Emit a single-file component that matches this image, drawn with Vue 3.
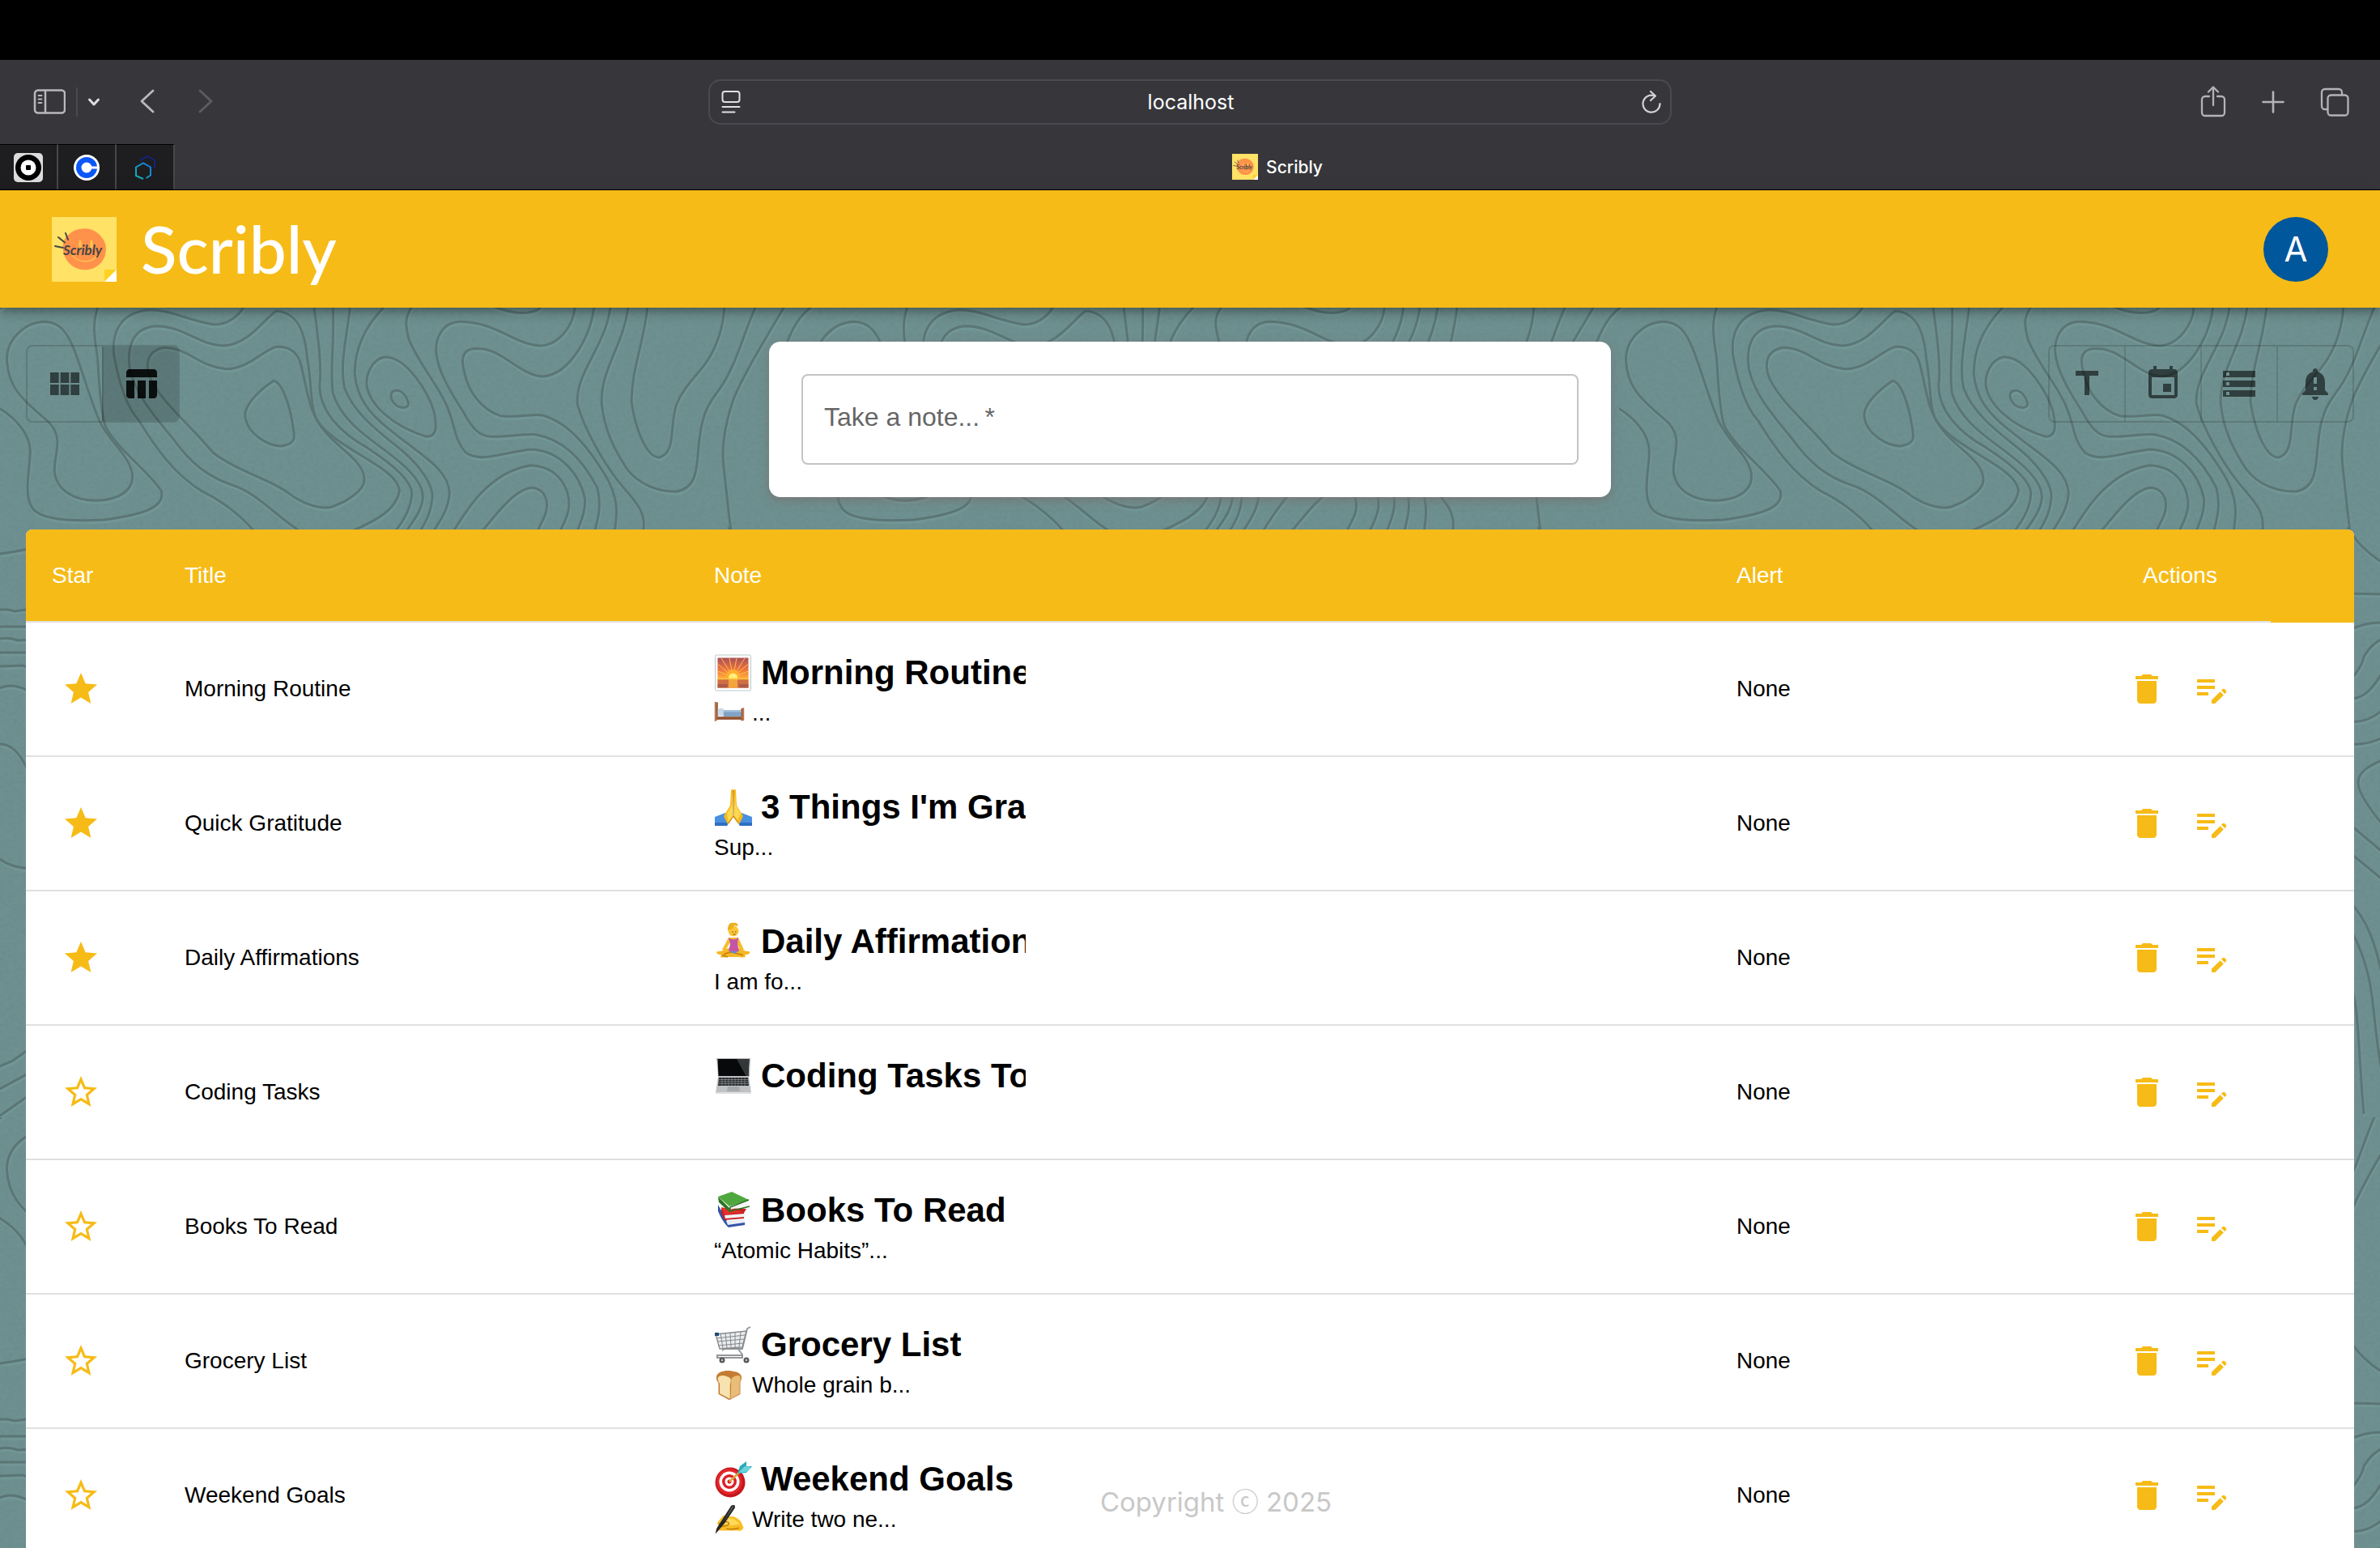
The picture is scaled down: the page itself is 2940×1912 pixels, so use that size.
<script setup>
import { ref } from 'vue'

const icons = {
  grid: 'M14.67 5v6.5H9.33V5h5.34zm1 6.5H21V5h-5.33v6.5zm-1 7.5v-6.5H9.33V19h5.34zm1-6.5V19H21v-6.5h-5.33zm-7.34 0H3V19h5.33v-6.5zm0-1V5H3v6.5h5.33z',
  table: 'M10 10.02h5V21h-5V10.02zM17 21h3c1.1 0 2-.9 2-2v-9h-5v11zm3-18H5c-1.1 0-2 .9-2 2v3h19V5c0-1.1-.9-2-2-2zM3 19c0 1.1.9 2 2 2h3V10H3v9z',
  title: 'M5 4v3h5.5v12h3V7H19V4H5z',
  event: 'M17 12h-5v5h5v-5zM16 1v2H8V1H6v2H5c-1.11 0-1.99.9-1.99 2L3 19c0 1.1.89 2 2 2h14c1.1 0 2-.9 2-2V5c0-1.1-.9-2-2-2h-1V1h-2zm3 18H5V8h14v11z',
  storage: 'M2 20h20v-4H2v4zm2-3h2v2H4v-2zM2 4v4h20V4H2zm4 3H4V5h2v2zm-4 7h20v-4H2v4zm2-3h2v2H4v-2z',
  bell: 'M18 16v-5c0-3.07-1.64-5.64-4.5-6.32V4c0-.83-.67-1.5-1.5-1.5s-1.5.67-1.5 1.5v.68C7.63 5.36 6 7.92 6 11v5l-2 2v1h16v-1l-2-2zm-5 0h-2v-2h2v2zm0-4h-2V8h2v4zm-1 10c1.1 0 2-.9 2-2h-4c0 1.1.89 2 2 2z',
  star: 'M12 17.27L18.18 21l-1.64-7.03L22 9.24l-7.19-.61L12 2 9.19 8.63 2 9.24l5.46 4.73L5.82 21z',
  starOutline: 'M22 9.24l-7.19-.62L12 2 9.19 8.63 2 9.24l5.46 4.73L5.82 21 12 17.27 18.18 21l-1.63-7.03L22 9.24zM12 15.4l-3.76 2.27 1-4.28-3.32-2.88 4.38-.38L12 6.1l1.71 4.04 4.38.38-3.32 2.88 1 4.28L12 15.4z',
  trash: 'M6 19c0 1.1.9 2 2 2h8c1.1 0 2-.9 2-2V7H6v12zM19 4h-3.5l-1-1h-5l-1 1H5v2h14V4z',
  edit: 'M3 10h11v2H3v-2zm0-2h11V6H3v2zm0 8h7v-2H3v2zm15.01-3.13.71-.71c.39-.39 1.02-.39 1.41 0l.71.71c.39.39.39 1.02 0 1.41l-.71.71-2.12-2.12zm-.71.71-5.3 5.3V21h2.12l5.3-5.3-2.12-2.12z',
}

const views = [
  { key: 'grid', label: 'Grid view' },
  { key: 'table', label: 'Table view' },
]
const filters = [
  { key: 'title', label: 'Sort by title' },
  { key: 'event', label: 'Sort by date' },
  { key: 'storage', label: 'Sort by storage' },
  { key: 'bell', label: 'Sort by alert' },
]
const view = ref('table')
const draft = ref('')

// Emoji artwork, each on a 48 x 48 canvas.
const emoji = {
  sunrise: '<defs><linearGradient id="sky" x1="0" y1="0" x2="0" y2="1"><stop offset="0" stop-color="#a8505a"/><stop offset=".4" stop-color="#ee7440"/><stop offset=".7" stop-color="#ffb03a"/></linearGradient></defs><rect x="1.500" y="2" width="44" height="44" rx="1.500" fill="#fff" stroke="#b9c8c8"/><path fill="url(#sky)" d="M4.500 5.500h38v37h-38z"/><g stroke="#ffbe48" stroke-width="1"><path d="M23.500 29 9 6M23.500 29 19 6M23.500 29 28 6M23.500 29 38 6M23.500 29 4.500 13M23.500 29 42.500 13M23.500 29 4.500 22M23.500 29 42.500 22"/></g><circle cx="23.500" cy="29" r="9" fill="#ffae2e"/><circle cx="23.500" cy="30" r="5.500" fill="#ffee7a"/><path fill="#cf6f43" d="M4.500 31.500h38v11h-38z"/><path fill="#f3a53c" d="M18 31.500h11v11H18z"/><path d="M4.500 31.500h38" stroke="#ffc83e" stroke-width="1.500"/><path fill="#9a4d52" opacity=".6" d="M4.500 38h12v4.500h-12zM31 38h11.500v4.500H31z"/>',
  bed: '<path fill="#b87750" d="M1 6l4 1v28l-4 2zM43 16l4-1v20l-4 1z"/><path fill="#8d4f33" d="M4 7h2v26H4zM42 17h2v18h-2z"/><path fill="#a96a49" d="M3 29h42v5H3z"/><path fill="#7c452f" d="M5 31h38v1.500H5z"/><path fill="#c9d8e6" d="M6 18c4-3 9-2 10 2v8H6z"/><path fill="#7fa3c6" d="M15 19h27v10H15z"/><path fill="#a0bedb" d="M15 19h27l1 3H15z"/>',
  pray: '<path fill="#4a90e0" d="M1 36l13-5 7 8-5 8H1zM47 36l-13-5-7 8 5 8h15z"/><path fill="#2f6fc0" d="M1 43h17l-2 4H1zM47 43H30l2 4h15z"/><path fill="#f8b91d" d="M12 35l8-13 1-18c0-3 3-3 3 0l1 31-8 10zM36 35l-8-13-1-18c0-3-3-3-3 0l-1 31 8 10z"/><path fill="#ffd84f" d="M16 32l6-10 .5-17 1 30-6 7zM33 32l-6-10-1-15-1 27 4 6z"/><path d="M24 3v32l-6 9M24 35l6 9" fill="none" stroke="#b97a10"/>',
  yoga: '<path fill="#f5b723" d="M5 36c5 1 10-5 15-4l4 3 4-3c5-1 10 5 15 4 4 2-2 5-5 4 3 4-3 4-7 3H16c-4 1-10 1-7-3-3 1-9-3-4-4z"/><path d="M12 40c8-5 15-2 24 1M10 41l7 2" stroke="#c67c10" fill="none" stroke-width="1.500"/><path fill="#f7bd2c" d="M18 19l12 0 7 15-4 1-7-12h-5l-7 12-4-1z"/><path fill="#c455a5" d="M18 19c3 3 9 3 12 0l-1 8 2 9H18l2-9z"/><path fill="#5a90d8" d="M19 36h11l-5 3z"/><circle cx="24" cy="11" r="6.500" fill="#fbc638"/><path fill="#edb01e" d="M17 10c0-6 2-10 7-9 6-1 6 4 5 4l-4-1-2 4z"/><path d="M22 12h1.500M26 12h1.500M23.500 15h3" stroke="#7c4c11"/>',
  laptop: '<path fill="#b9bbbd" d="M3 2h42l-1 23H5z"/><path fill="#08090a" d="M4.500 3h39l-1 21h-37z"/><path fill="#33373a" d="M28 3h15.500l-1 21h-3z"/><path fill="#bfc1c3" d="M5 25h38l3 20H2z"/><path fill="#26292b" d="M6 26h36l1 10H5z"/><path d="M5 28.500h38M5 31h38M5 33.500h38" stroke="#8b8e91" stroke-width=".8"/><path d="M10 26v10M14 26v10M18 26v10M22 26v10M26 26v10M30 26v10M34 26v10M38 26v10" stroke="#8b8e91" stroke-width=".7"/><path fill="#a7aaad" d="M17 37h14l1 6H16z"/><path fill="#dfe0e1" d="M2 44h44v2H2z"/>',
  books: '<path fill="#3454a8" d="M5 17l12 22 21-2v5l-20 3C12 40 7 30 5 25z"/><path fill="#e9eef5" d="M15 37l23-2v4l-21 3z"/><path fill="#c81f26" d="M9 21l31 1-3 5v7l-24 2-4-9z"/><path fill="#f2f2f2" d="M13 30l25-2v4l-24 2z"/><path fill="#e7302b" d="M9 20l28 6-24 3z"/><path fill="#2c7526" d="M5 7l14 14v5L6 14z"/><path fill="#4fa83d" d="M5 7l17-6 21 10-24 8z"/><path fill="#f4f4f4" d="M20 20l22-7v4l-22 6z"/><path d="M43 11l-23 9v5l24-6" stroke="#26701f" stroke-width="1.500" fill="none"/>',
  cart: '<path d="M45 2l-4 2-6 25H13L10 31" fill="none" stroke="#8f9295" stroke-width="1.800"/><path fill="#d4d7d9" fill-opacity=".5" stroke="#85888b" stroke-width="1.300" d="M2 11l38-4-5 20-28 2z"/><path d="M3 16l35-4M4 20l33-3M5 25l31-3M8 10l3 18M14 10l2 18M20 9l1 18M26 8l0 19M33 8l-2 19" stroke="#85888b" stroke-width="1"/><path d="M29 28l6 8v4H4v-3h31" fill="none" stroke="#94979a" stroke-width="2"/><circle cx="10" cy="43" r="3.500" fill="#55585b"/><circle cx="40" cy="43" r="3.500" fill="#55585b"/><circle cx="10" cy="43" r="1.200" fill="#ccc"/><circle cx="40" cy="43" r="1.200" fill="#ccc"/><path fill="#214a78" d="M1 9h5v4H1z"/>',
  bread: '<path fill="#c47c33" d="M4 10C5 3 18 0 28 2c10 1 15 5 15 10 0 3-1 5-2 7v19L24 47 7 38V20c-2-2-4-6-3-10z"/><path fill="#e9bd77" d="M27 14c4-5 12-7 14-3 1 3 0 5-1 8v18l-14 8z"/><path fill="#f7e2b0" d="M6 13c1-5 9-5 14-3 6 2 7 5 6 9l-1 5v21L9 37V21c-2-2-3-5-3-8z"/>',
  target: '<circle cx="20" cy="28" r="18.500" fill="#c4171e"/><circle cx="19" cy="27" r="16" fill="#e3262b"/><circle cx="19" cy="27" r="12.500" fill="#fff"/><circle cx="19" cy="27" r="9" fill="#da2127"/><circle cx="19" cy="27" r="5.500" fill="#fff"/><circle cx="19" cy="27" r="2.500" fill="#d31d23"/><path d="M19 27l15-14" stroke="#d7a93a" stroke-width="2.500"/><path fill="#2ba8b8" d="M29 17l3-9 8-6 0 6 7 0-7 8z"/><path fill="#69d5dc" d="M30 16l8-8 9 1-7 6z"/>',
  writing: '<path fill="#f8bd25" d="M5 29l8-10c3-3 6-1 6 1l9-1c5 0 9 3 14 8l4 9c-1 5-5 6-9 5H9c-5 0-5-5-2-8z"/><path fill="#ffd957" d="M14 21l13 1c6 1 10 6 14 9l-14 2-13-2z"/><path d="M7 31l11-4c6 0 7 5 2 6l-8 2M19 38c6 1 14 1 20-1" fill="none" stroke="#be7a0c" stroke-width="1.800"/><path fill="#252628" d="M27 2l5-1 1 4-16 24-11 13-4 4 2-8z"/><path fill="#636568" d="M28 4l3-1-16 25z"/>',
}

const notes = [
  { title: 'Morning Routine', starred: true, icon: 'sunrise', heading: 'Morning Routine', subIcon: 'bed', text: '...' },
  { title: 'Quick Gratitude', starred: true, icon: 'pray', heading: "3 Things I'm Grateful For", text: 'Sup...' },
  { title: 'Daily Affirmations', starred: true, icon: 'yoga', heading: 'Daily Affirmations', text: 'I am fo...' },
  { title: 'Coding Tasks', starred: false, icon: 'laptop', heading: 'Coding Tasks Today', text: '' },
  { title: 'Books To Read', starred: false, icon: 'books', heading: 'Books To Read', text: '“Atomic Habits”...' },
  { title: 'Grocery List', starred: false, icon: 'cart', heading: 'Grocery List', subIcon: 'bread', text: 'Whole grain b...' },
  { title: 'Weekend Goals', starred: false, icon: 'target', heading: 'Weekend Goals', subIcon: 'writing', text: 'Write two ne...' },
]

// Contour lines of the backdrop tile (drawn on a 1633 x 3000 grid, scaled to 1000 x 1000).
const contours = [
  'M90 64C50 66 12 130 14 210C18 330 60 370 100 440C130 500 108 560 110 620C114 690 150 727 195 727C240 724 270 690 267 630C262 560 220 510 200 430C180 340 165 240 150 170C135 100 120 66 90 64Z',
  'M200 0C185 60 190 120 197 200C200 300 205 430 215 460C240 540 300 620 325 690C335 750 290 780 210 798C140 805 90 798 70 765C45 720 60 620 61 550C62 480 30 420 0 386L-60 310',
  'M495 0C480 50 455 78 430 74C380 60 340 18 300 20C240 30 225 110 230 190C240 290 255 380 280 430C310 520 350 630 410 695C450 730 490 790 512 840',
  'M710 840C760 800 800 760 806 690C800 600 680 540 640 430C625 380 630 300 620 200C615 100 600 30 557 24C530 60 500 150 450 153C400 150 370 80 315 80C270 85 255 150 262 240C275 340 310 410 350 500C385 590 420 640 470 670C520 700 560 790 605 840',
  'M557 157C530 170 500 240 455 239C400 230 380 160 330 160C290 175 295 240 305 280C330 370 380 440 430 550C480 620 550 650 590 710C620 745 650 760 670 750C700 730 735 690 735 650C735 580 680 530 655 470C620 400 620 300 605 210C595 165 575 155 557 157Z',
  'M552 283C530 310 490 370 495 420C500 480 540 525 568 525C600 515 595 490 590 440C585 380 570 290 552 283Z',
  'M633 0C640 100 650 220 645 300C645 400 690 480 740 530C790 590 830 650 831 700C830 760 810 810 798 840',
  'M672 0C675 150 665 250 672 330C690 440 750 500 790 560C840 630 855 680 853 720C850 770 830 810 820 840',
  'M707 0C700 120 685 220 695 310C715 410 770 480 810 540C855 610 875 680 872 720C870 770 860 800 848 840',
  'M780 0C730 90 715 180 716 260C720 340 740 400 790 470C850 560 905 610 907 700C905 760 885 810 875 840',
  'M775 195C750 205 738 260 740 300C745 370 790 450 860 490C885 490 880 440 876 400C865 330 820 190 775 195Z',
  'M800 319C785 320 785 350 800 375C815 390 828 380 823 360C820 340 810 318 800 319Z',
  'M835 0C812 50 820 90 825 130C845 220 880 290 900 370C920 450 915 500 940 550C970 585 1000 555 1070 537C1130 540 1170 630 1180 720C1182 770 1170 810 1165 840',
  'M1160 0C1160 70 1130 150 1090 153C1040 150 1000 65 930 64C890 65 878 130 880 180C885 260 915 340 935 400C950 450 965 490 990 490C1020 492 1050 480 1080 482C1140 500 1180 590 1205 680C1215 750 1205 800 1200 840',
  'M1199 0C1195 110 1150 260 1095 267C1050 265 1010 160 965 164C925 160 932 220 938 260C945 320 970 390 1010 413C1050 420 1070 405 1095 411C1150 440 1190 540 1220 630C1250 720 1245 780 1240 840',
  'M1232 0C1225 150 1160 250 1165 370C1180 470 1220 590 1245 650C1275 720 1305 760 1298 840',
  'M1268 0C1260 150 1210 240 1214 370C1220 470 1240 540 1265 610C1290 670 1330 695 1365 693C1410 680 1405 590 1410 520C1415 420 1425 380 1445 330C1485 240 1500 100 1527 0',
  'M1307 0C1300 140 1275 230 1274 360C1280 440 1300 565 1330 567C1365 550 1350 450 1365 370C1380 300 1410 260 1430 200C1450 140 1460 70 1462 0',
  'M1585 0C1540 140 1500 260 1480 350C1465 430 1455 520 1460 600C1465 680 1470 780 1475 840',
  'M10 0C-12 30 -28 60 -45 140L-70 210',
  'M1643 0C1621 30 1605 60 1588 140L1563 210',
  'M915 840C945 750 990 620 1070 596C1130 600 1150 690 1148 750C1145 790 1138 810 1130 840',
  'M973 840C1000 780 1040 680 1075 679C1105 690 1105 740 1102 765C1100 790 1090 810 1085 840',
  'M985 0C1020 25 1040 35 1065 30C1080 25 1090 20 1094 0',
]

// Contour lines that only show in the margins beside the table, in tile pixels.
const edgeContours = [
  'M0 308Q16 306 40 301', 'M0 377H10L18 379L40 376', 'M0 398H40', 'M0 413Q12 411 22 415L40 414',
  'M0 430H40', 'M0 447L28 446L40 450', 'M0 474Q16 466 40 480', 'M0 543Q20 543 34 575',
  'M0 685Q14 696 40 697', 'M0 941L16 934L40 917', 'M0 969L40 947', 'M0 1002L40 974',
  'M900 275Q915 302 945 320', 'M900 357L945 358', 'M900 404Q918 392 945 393', 'M900 468Q918 448 920 435Q930 418 945 412',
  'M900 487Q925 490 945 450', 'M900 515Q925 518 945 499', 'M900 543Q925 545 945 534', 'M945 562C900 580 905 595 945 645',
  'M900 640L945 678', 'M900 675L945 712', 'M900 735C925 760 935 790 945 840', 'M900 765C920 800 928 830 932 870S940 940 945 960',
  'M900 830C915 860 912 910 920 1000',
]
</script>

<template>
  <div class="screen">
    <div class="menu-strip"></div>

    <div class="toolbar">
      <div class="tools tools-left">
        <button class="plain" aria-label="Show sidebar">
          <svg width="40" height="32" viewBox="0 0 40 32" fill="none" stroke="#b9b8bc" stroke-width="2.500" stroke-linecap="round">
            <rect x="2" y="1.500" width="37" height="28" rx="4" />
            <path d="M15 2v27" />
            <path d="M6.500 8h4M6.500 12.500h4M6.500 17h4" stroke-width="1.800" />
          </svg>
        </button>
        <span class="divider"></span>
        <button class="plain chevron" aria-label="Tab groups">
          <svg width="16" height="12" viewBox="0 0 16 12" fill="none" stroke="#dddce0" stroke-width="3" stroke-linecap="round" stroke-linejoin="round"><path d="M2.500 3 8 9l5.500-6" /></svg>
        </button>
        <button class="plain back" aria-label="Back">
          <svg width="20" height="32" viewBox="0 0 20 32" fill="none" stroke="#b9b8bc" stroke-width="2.800" stroke-linecap="round" stroke-linejoin="round"><path d="M17 2 3 15l14 13" /></svg>
        </button>
        <button class="plain forward" aria-label="Forward">
          <svg width="20" height="32" viewBox="0 0 20 32" fill="none" stroke="#5d5c61" stroke-width="2.800" stroke-linecap="round" stroke-linejoin="round"><path d="m3 2 14 13L3 28" /></svg>
        </button>
      </div>

      <div class="address">
        <svg width="24" height="30" viewBox="0 0 24 30" fill="none" stroke="#e0e0e2" stroke-width="2" stroke-linecap="round">
          <rect x="1.500" y="2" width="21" height="13" rx="3" />
          <path d="M1.500 21h21M1.500 27.500h15" />
        </svg>
        <span class="host">localhost</span>
        <button class="plain" aria-label="Reload">
          <svg width="26" height="30" viewBox="0 0 26 30" fill="none" stroke="#d2d1d5" stroke-width="2.200" stroke-linecap="round" stroke-linejoin="round">
            <path d="M17 7.500A10.500 10.500 0 1 0 23.500 17" /><path d="m12 2 6 5.500-6 5.500" />
          </svg>
        </button>
      </div>

      <div class="tools tools-right">
        <button class="plain" aria-label="Share">
          <svg width="32" height="40" viewBox="0 0 32 40" fill="none" stroke="#b4b3b7" stroke-width="2.300" stroke-linecap="round" stroke-linejoin="round">
            <path d="M11 13H6a4 4 0 0 0-4 4v16a4 4 0 0 0 4 4h20a4 4 0 0 0 4-4V17a4 4 0 0 0-4-4h-5M16 24V2M10 7.500 16 1.500l6 6" />
          </svg>
        </button>
        <button class="plain" aria-label="New tab">
          <svg width="28" height="28" viewBox="0 0 28 28" fill="none" stroke="#b4b3b7" stroke-width="2.600" stroke-linecap="round"><path d="M14 1.500v25M1.500 14h25" /></svg>
        </button>
        <button class="plain" aria-label="Tab overview">
          <svg width="36" height="36" viewBox="0 0 36 36" fill="none" stroke="#b4b3b7" stroke-width="2.300" stroke-linejoin="round">
            <rect x="9.500" y="9.500" width="25" height="25" rx="4" />
            <path d="M9 27H6a4 4 0 0 1-4-4V6a4 4 0 0 1 4-4h17a4 4 0 0 1 4 4v3" />
          </svg>
        </button>
      </div>
    </div>

    <div class="tabs">
      <button class="pinned" aria-label="Pinned tab 1">
        <svg width="36" height="36" viewBox="0 0 36 36"><rect width="36" height="36" rx="5" fill="#dcdcdc" /><circle cx="18" cy="18" r="16" /><circle cx="18" cy="18" r="9.500" fill="#fff" /><rect x="15" y="15" width="6" height="6" rx="1" /></svg>
      </button>
      <button class="pinned" aria-label="Pinned tab 2">
        <svg width="36" height="36" viewBox="0 0 36 36"><circle cx="18" cy="18" r="16" fill="#fff" /><circle cx="18" cy="18" r="13" fill="#0b57f7" /><circle cx="18" cy="18" r="6.500" fill="#fff" /><path d="M20 16.500h12v3H20z" fill="#fff" /></svg>
      </button>
      <button class="pinned" aria-label="Pinned tab 3">
        <svg width="36" height="36" viewBox="0 0 36 36" fill="none" stroke-width="2">
          <defs><linearGradient id="hex" x1="1" y1="0" x2="0" y2="1"><stop offset="0" stop-color="#1878e8" /><stop offset="1" stop-color="#10b4ac" /></linearGradient></defs>
          <path d="M13 10V8.500L21 4l9 5v10" stroke="#14247e" />
          <path d="M19.500 31 25 27.500V17.500L16 12.500l-9 5v10.500l9 4" stroke="url(#hex)" />
        </svg>
      </button>
      <div class="active-tab">
        <svg class="favicon" viewBox="0 0 80 80" aria-hidden="true"><use href="#scribly-logo" /></svg>
        <span>Scribly</span>
      </div>
    </div>

    <header class="app-bar">
      <a class="brand" href="#">
        <svg class="logo" viewBox="0 0 80 80" aria-hidden="true">
          <g id="scribly-logo">
            <path d="M0 0h80v80H0z" fill="#ffe266" />
            <path d="M39 14.500c8-1 18 4 22 10 6 6 7 15 5 22-2 8-8 14-15 17-8 3-18 2-24-2-7-4-12-12-13-20s1-15 6-19c5-5 11-8 19-8z" fill="#ff924a" />
            <ellipse cx="35" cy="34" rx="1.800" ry="6" fill="#ffc250" /><ellipse cx="49" cy="34" rx="1.800" ry="6" fill="#ffc250" />
            <path d="M24 45c6 12 24 13 32 3" fill="none" stroke="#ffc250" stroke-width="1.500" />
            <path d="m4 36 10 2M8 25l8 6.500M17 20l3 8" stroke="#454545" stroke-width="2" stroke-linecap="round" />
            <text x="14" y="47" class="logo-text">Scribly</text>
            <path d="M65 80V65h15z" fill="#ffd21f" /><path d="M65 80 80 65v15z" fill="#fff" />
          </g>
        </svg>
        <span class="brand-name">Scribly</span>
      </a>
      <button class="avatar" aria-label="Account">A</button>
    </header>

    <main class="page">
      <svg class="backdrop" width="100%" height="100%" aria-hidden="true">
        <defs>
          <pattern id="topo" width="1000" height="1000" patternUnits="userSpaceOnUse">
            <g v-for="layer in ['light', 'dark']" :key="layer" :class="layer">
              <g transform="scale(.6123 .3333) translate(0 -12)">
                <path v-for="(d, i) in contours" :key="i" :d="d" vector-effect="non-scaling-stroke" />
              </g>
              <path v-for="(d, i) in edgeContours" :key="'e' + i" :d="d" transform="translate(0 -4)" />
            </g>
          </pattern>
          <filter id="grain" x="0" y="0" width="100%" height="100%">
            <feTurbulence type="fractalNoise" baseFrequency=".18 .26" numOctaves="2" seed="4" />
            <feColorMatrix values="0 0 0 0 .1  0 0 0 0 .2  0 0 0 0 .2  .9 0 0 0 -.36" />
          </filter>
        </defs>
        <rect width="100%" height="100%" filter="url(#grain)" opacity=".5" />
        <rect width="100%" height="100%" fill="url(#topo)" />
      </svg>

      <div class="controls">
        <div class="toggle-group">
          <button
            v-for="v in views" :key="v.key" class="toggle" :class="{ selected: view === v.key }"
            :aria-label="v.label" :aria-pressed="view === v.key" @click="view = v.key"
          >
            <svg class="icon" viewBox="0 0 24 24"><path :d="icons[v.key]" /></svg>
          </button>
        </div>

        <form class="composer" @submit.prevent>
          <input v-model="draft" class="composer-input" type="text" placeholder="Take a note...&#8201;*" aria-label="Take a note" />
        </form>

        <div class="toggle-group toggle-group-end">
          <button v-for="f in filters" :key="f.key" class="toggle" :aria-label="f.label">
            <svg class="icon" viewBox="0 0 24 24"><path :d="icons[f.key]" /></svg>
          </button>
        </div>
      </div>

      <div class="table-card">
        <table class="notes">
          <colgroup>
            <col class="col-star" /><col class="col-title" /><col /><col class="col-alert" /><col class="col-actions" /><col class="col-end" />
          </colgroup>
          <thead>
            <tr>
              <th>Star</th><th>Title</th><th>Note</th><th>Alert</th><th class="center">Actions</th><td class="blank"></td>
            </tr>
          </thead>
          <tbody>
            <tr v-for="note in notes" :key="note.title">
              <td class="star-cell">
                <button class="icon-button" :aria-label="note.starred ? 'Unstar' : 'Star'">
                  <svg class="icon" viewBox="0 0 24 24"><path :d="note.starred ? icons.star : icons.starOutline" /></svg>
                </button>
              </td>
              <td>{{ note.title }}</td>
              <td>
                <div class="preview">
                  <h2 class="preview-title">
                    <svg class="emoji" viewBox="0 0 48 48" aria-hidden="true" v-html="emoji[note.icon]"></svg>
                    <span>{{ note.heading }}</span>
                  </h2>
                  <p class="preview-text">
                    <svg v-if="note.subIcon" class="emoji-small" viewBox="0 0 48 48" aria-hidden="true" v-html="emoji[note.subIcon]"></svg>
                    <span>{{ note.text }}</span>
                  </p>
                </div>
              </td>
              <td>None</td>
              <td class="actions-cell">
                <div class="actions">
                  <button class="icon-button" aria-label="Delete"><svg class="icon" viewBox="0 0 24 24"><path :d="icons.trash" /></svg></button>
                  <button class="icon-button" aria-label="Edit"><svg class="icon" viewBox="0 0 24 24"><path :d="icons.edit" /></svg></button>
                </div>
              </td>
              <td></td>
            </tr>
          </tbody>
        </table>
      </div>

      <footer class="copyright">Copyright ⓒ 2025</footer>
    </main>
  </div>
</template>

<style>
body {
  margin: 0;
  background: #6b8a8a;
}
</style>

<style scoped>
.screen {
  display: flex;
  flex-direction: column;
  height: 100vh;
  overflow: hidden;
  font-family: "Liberation Sans", Arial, sans-serif;
  font-size: 28px;
  color: #000;
}
button {
  margin: 0;
  padding: 0;
  border: 0;
  background: none;
  font: inherit;
  color: inherit;
  cursor: pointer;
}
svg {
  display: block;
  flex: none;
}

/* Browser frame */
.menu-strip {
  flex: none;
  height: 74px;
  background: #000;
}
.toolbar {
  flex: none;
  display: grid;
  grid-template-columns: 1fr minmax(0, 1190px) 1fr;
  align-items: center;
  height: 104px;
  background: #37363b;
}
.tools {
  display: flex;
  align-items: center;
}
.tools-left {
  padding-left: 41px;
}
.tools-right {
  justify-content: flex-end;
  gap: 44px;
  padding-right: 38px;
}
.divider {
  width: 2px;
  height: 36px;
  margin: 0 12px 0 13px;
  background: #4a494e;
}
.back {
  margin-left: 48px;
}
.forward {
  margin-left: 52px;
}
.address {
  display: flex;
  align-items: center;
  justify-content: space-between;
  box-sizing: border-box;
  height: 56px;
  padding: 0 10px 0 14px;
  border: 2px solid #4b4a50;
  border-radius: 15px;
  color: #fff;
}
.host {
  font-family: Inter, sans-serif;
  font-size: 25px;
}
.tabs {
  flex: none;
  display: flex;
  height: 56px;
  border-bottom: 1px solid #000;
  background: #37363b;
}
.pinned {
  display: grid;
  place-items: center;
  box-sizing: border-box;
  width: 72px;
  border-top: 1px solid #000;
  border-right: 2px solid #47464b;
  background: #1e1d20;
}
.active-tab {
  flex: 1;
  display: flex;
  align-items: center;
  justify-content: center;
  gap: 10px;
  font-family: Inter, sans-serif;
  font-size: 21px;
  font-weight: 500;
  color: #fff;
}
.favicon {
  width: 32px;
  height: 32px;
}

/* Application bar */
.app-bar {
  position: relative;
  z-index: 1;
  flex: none;
  display: flex;
  align-items: center;
  justify-content: space-between;
  height: 145px;
  padding: 0 64px;
  background: #f6bb16;
  box-shadow: 0 4px 8px -2px rgba(0, 0, 0, 0.2), 0 8px 10px rgba(0, 0, 0, 0.14), 0 2px 20px rgba(0, 0, 0, 0.12);
}
.brand {
  display: flex;
  align-items: center;
  gap: 30px;
  color: #fff;
  text-decoration: none;
}
.logo {
  width: 80px;
  height: 80px;
}
.logo-text {
  font-family: Lato, sans-serif;
  font-size: 17px;
  font-style: italic;
  font-weight: 700;
  fill: #454545;
}
.brand-name {
  padding-bottom: 4px;
  font-family: Lato, sans-serif;
  font-size: 82px;
  font-weight: 500;
  line-height: 96px;
}
.avatar {
  width: 80px;
  height: 80px;
  border-radius: 50%;
  background: #01579b;
  font-family: Inter, sans-serif;
  font-size: 42px;
  color: #fff;
}

/* Page */
.page {
  position: relative;
  flex: 1;
  min-height: 0;
  background: #6f9090;
}
.backdrop {
  position: absolute;
  inset: 0;
}
.dark,
.light {
  fill: none;
  stroke-width: 3px;
}
.dark {
  stroke: #5b7575;
}
.light {
  stroke: #729696;
  transform: translate(1px, 3px);
}
.controls {
  position: relative;
  display: grid;
  grid-template-columns: 1fr minmax(0, 1040px) 1fr;
  align-items: start;
  padding: 42px 32px 40px;
}
.toggle-group {
  display: flex;
  justify-self: start;
  box-sizing: border-box;
  height: 96px;
  margin-top: 4px;
  border: 2px solid rgba(0, 0, 0, 0.14);
  border-radius: 8px;
  overflow: hidden;
}
.toggle-group-end {
  justify-self: end;
}
.toggle {
  display: grid;
  place-items: center;
  width: 92px;
  color: rgba(0, 0, 0, 0.56);
}
.toggle + .toggle {
  width: 94px;
  border-left: 2px solid rgba(0, 0, 0, 0.12);
}
.toggle.selected {
  background: rgba(0, 0, 0, 0.16);
  color: rgba(0, 0, 0, 0.88);
}
.icon {
  width: 48px;
  height: 48px;
  fill: currentColor;
}
.composer {
  padding: 40px;
  border-radius: 14px;
  background: #fff;
  box-shadow: 0 4px 12px rgba(120, 110, 110, 0.7);
}
.composer-input {
  display: block;
  box-sizing: border-box;
  width: 100%;
  height: 112px;
  padding: 0 26px 6px;
  border: 2px solid #c4c4c4;
  border-radius: 8px;
  outline: none;
  background: #fff;
  font: inherit;
  font-size: 32px;
}
.composer-input::placeholder {
  color: #666;
  opacity: 1;
}

/* Notes table */
.table-card {
  position: relative;
  margin: 0 32px;
  border-radius: 8px;
  overflow: hidden;
  background: #fff;
}
.notes {
  width: 100%;
  table-layout: fixed;
  border-collapse: separate;
  border-spacing: 0;
}
.col-star {
  width: 164px;
}
.col-title {
  width: 654px;
}
.col-alert {
  width: 468px;
}
.col-actions {
  width: 224px;
}
.col-end {
  width: 103px;
}
.notes th,
.notes td {
  box-sizing: border-box;
  padding: 32px;
  border-bottom: 2px solid #e0e0e0;
  text-align: left;
  line-height: 40px;
}
.notes th,
.notes .blank {
  height: 115px;
  background: #f6bb16;
  font-weight: 400;
  color: #fff;
}
.notes .blank {
  border-bottom-color: #f6bb16;
}
.notes .center {
  text-align: center;
}
.notes .star-cell {
  padding: 0 28px;
}
.notes .actions-cell {
  padding: 0 0 0 31px;
}
.icon-button {
  display: grid;
  place-items: center;
  width: 80px;
  height: 80px;
  color: #f6bb16;
}
.actions {
  display: flex;
}
.preview {
  max-width: 385px;
}
.preview-title,
.preview-text {
  display: flex;
  align-items: center;
  margin: 0;
  white-space: nowrap;
  overflow: hidden;
}
.preview-title {
  gap: 10px;
  height: 60px;
  font-size: 42px;
  line-height: 60px;
}
.preview-text {
  gap: 9px;
  height: 40px;
}
.emoji {
  width: 48px;
  height: 48px;
}
.emoji-small {
  width: 38px;
  height: 38px;
}

.copyright {
  position: absolute;
  right: 0;
  bottom: 32px;
  left: 64px;
  font-family: Inter, "Noto Sans CJK KR", sans-serif;
  font-size: 33px;
  line-height: 50px;
  text-align: center;
  color: #c8c8c8;
  pointer-events: none;
}
</style>
